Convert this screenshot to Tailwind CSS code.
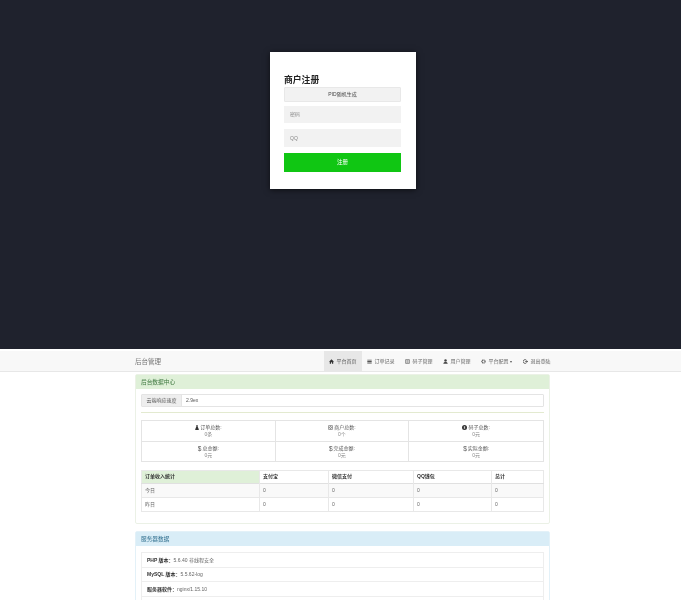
<!DOCTYPE html>
<html lang="zh-CN">
<head>
  <meta charset="UTF-8">
  <meta name="viewport" content="width=device-width, initial-scale=1.0">
  <title>商户注册</title>
  <script src="https://cdn.jsdelivr.net/npm/@tailwindcss/browser@4"></script>
</head>
<body class="bg-white h-[600px] overflow-hidden font-['Liberation_Sans','Noto_Sans_CJK_SC',sans-serif] text-[#555]">
<div class="blur-[0.35px]">
  <!-- register screen -->
  <section class="h-[349px] bg-[#1f222d] pt-[52px] pl-[270px]">
    <div class="w-[146px] h-[137px] bg-white shadow-[0_1px_6px_rgba(0,0,0,0.6)] pl-[14px] pr-[15px] pt-[22px]">
      <h1 class="text-[8.8px] leading-[13px] font-bold text-[#222]">商户注册</h1>
      <div class="h-[15px] bg-[#f2f2f2] border border-[#e8e8e8] rounded-[1px] text-[5px] leading-[13px] text-center text-[#444]">PID随机生成</div>
      <div class="h-[17px] mt-[4px] bg-[#f2f2f2] text-[5px] leading-[17px] pl-[6px] text-[#888]">密码</div>
      <div class="h-[18px] mt-[6px] bg-[#f2f2f2] text-[5px] leading-[18px] pl-[6px] text-[#888]">QQ</div>
      <button class="block w-full h-[19px] mt-[6px] bg-[#10c613] text-white text-[5.5px] leading-[19px]">注册</button>
    </div>
  </section>

  <!-- admin page -->
  <nav class="mt-[2px] h-[21px] bg-[#f8f8f8] border-b border-[#e7e7e7] flex items-center pl-[135px] pr-[125px]">
    <span class="pt-px text-[6.5px] text-[#777]">后台管理</span>
    <div class="ml-auto flex items-center h-full text-[5px] text-[#666]">
      <a class="h-full flex items-center gap-[2px] pt-px px-[5.5px] bg-[#e7e7e7] text-[#555]">
        <svg class="w-[5px] h-[5px]" viewBox="0 0 16 16" fill="#333"><path d="M8 1 0 8.500h2.500V15h4v-4.500h3V15h4V8.500H16z"/></svg>平台首页</a>
      <a class="h-full flex items-center gap-[2px] pt-px px-[5.5px]">
        <svg class="w-[5px] h-[5px]" viewBox="0 0 16 16" fill="#555"><path d="M1 2h14v3H1zM1 6.500h14v3H1zM1 11h14v3H1z"/></svg>订单记录</a>
      <a class="h-full flex items-center gap-[2px] pt-px px-[5.5px]">
        <svg class="w-[5px] h-[5px]" viewBox="0 0 16 16" fill="none" stroke="#555" stroke-width="2"><path d="M2 2h12v12H2zM5 6h6M5 10h6"/></svg>码子管理</a>
      <a class="h-full flex items-center gap-[2px] pt-px px-[5.5px]">
        <svg class="w-[5px] h-[5px]" viewBox="0 0 16 16" fill="#444"><circle cx="8" cy="5" r="4"/><path d="M1 15c0-4 3-5.500 7-5.500s7 1.500 7 5.500z"/></svg>用户管理</a>
      <a class="h-full flex items-center gap-[2px] pt-px px-[5.5px]">
        <svg class="w-[5px] h-[5px]" viewBox="0 0 16 16" fill="none" stroke="#444" stroke-width="3.500" stroke-dasharray="3 1.200"><circle cx="8" cy="8" r="5"/></svg>平台配置<span class="w-0 h-0 border-x-[1.500px] border-x-transparent border-t-[2px] border-t-[#555]"></span></a>
      <a class="h-full flex items-center gap-[2px] pt-px px-[5.5px]">
        <svg class="w-[5px] h-[5px]" viewBox="0 0 16 16" fill="none" stroke="#444" stroke-width="2.500"><path d="M11 4a6 6 0 1 0 0 8M7 8h8M12 5l3 3-3 3"/></svg>退出登陆</a>
    </div>
  </nav>

  <main class="w-[415px] ml-[135px] pt-[2px]">
    <!-- data center panel -->
    <section class="h-[150px] border border-[#ebf1e6] rounded-[2px]">
      <h2 class="h-[14px] bg-[#dff0d8] px-[5px] text-[5.7px] leading-[14px] text-[#3c763d]">后台数据中心</h2>
      <div class="px-[5px] pt-[5px]">
        <div class="flex h-[13px] border border-[#e4e4e4] rounded-[1px] text-[5px] leading-[11px]">
          <span class="w-[40px] bg-[#eee] text-center border-r border-[#e4e4e4]">云端响应速度</span>
          <span class="pl-[4px]">2.9ex</span>
        </div>
        <div class="mt-[5px] h-px bg-[#e3ead0]"></div>
        <div class="mt-[7px] grid grid-cols-3 h-[42px] border border-[#e4e4e4] text-center text-[5px] leading-[7px]">
          <div class="pt-[3px] border-r border-b border-[#e4e4e4]">
            <p class="flex justify-center items-center gap-px"><svg class="w-[4px] h-[5px]" viewBox="0 0 12 16" fill="#333"><path d="M4 0h4v5l4 9-1 2H1l-1-2 4-9z"/></svg>订单总数:</p>
            <p class="text-[#888]">0条</p>
          </div>
          <div class="pt-[3px] border-r border-b border-[#e4e4e4]">
            <p class="flex justify-center items-center gap-px"><svg class="w-[5px] h-[5px]" viewBox="0 0 16 16" fill="none" stroke="#444" stroke-width="2"><rect x="1" y="1" width="14" height="14" rx="4"/><circle cx="8" cy="8" r="3"/></svg>商户总数:</p>
            <p class="text-[#888]">0个</p>
          </div>
          <div class="pt-[3px] border-b border-[#e4e4e4]">
            <p class="flex justify-center items-center gap-px"><svg class="w-[5px] h-[5px]" viewBox="0 0 16 16" fill="#333"><circle cx="8" cy="8" r="8"/><path d="M6 4h4v8H6z" fill="#ccc"/></svg>码子总数:</p>
            <p class="text-[#888]">0元</p>
          </div>
          <div class="pt-[3px] border-r border-[#e4e4e4]">
            <p class="flex justify-center items-center gap-px"><span class="text-[6.5px]">$</span>总金额:</p>
            <p class="text-[#888]">0元</p>
          </div>
          <div class="pt-[3px] border-r border-[#e4e4e4]">
            <p class="flex justify-center items-center gap-px"><span class="text-[6.5px]">$</span>完成金额:</p>
            <p class="text-[#888]">0元</p>
          </div>
          <div class="pt-[3px]">
            <p class="flex justify-center items-center gap-px"><span class="text-[6.5px]">$</span>实际金额:</p>
            <p class="text-[#888]">0元</p>
          </div>
        </div>
        <table class="mt-[8px] w-full table-fixed border border-[#e8e8e8] text-[5px] text-[#666]">
          <colgroup><col class="w-[118px]"><col class="w-[69px]"><col class="w-[85px]"><col class="w-[78px]"><col></colgroup>
          <thead>
            <tr class="h-[13px] font-bold text-left text-[#333] border-b border-[#e0e0e0]">
              <th class="pl-[3px] bg-[#dff0d8]">订单收入统计</th>
              <th class="pl-[3px] border-l border-[#e8e8e8]">支付宝</th>
              <th class="pl-[3px] border-l border-[#e8e8e8]">微信支付</th>
              <th class="pl-[3px] border-l border-[#e8e8e8]">QQ钱包</th>
              <th class="pl-[3px] border-l border-[#e8e8e8]">总计</th>
            </tr>
          </thead>
          <tbody>
            <tr class="h-[14px] bg-[#f9f9f9] border-b border-[#e8e8e8]">
              <td class="pl-[3px]">今日</td><td class="pl-[3px] border-l border-[#e8e8e8]">0</td><td class="pl-[3px] border-l border-[#e8e8e8]">0</td><td class="pl-[3px] border-l border-[#e8e8e8]">0</td><td class="pl-[3px] border-l border-[#e8e8e8]">0</td>
            </tr>
            <tr class="h-[14px]">
              <td class="pl-[3px]">昨日</td><td class="pl-[3px] border-l border-[#e8e8e8]">0</td><td class="pl-[3px] border-l border-[#e8e8e8]">0</td><td class="pl-[3px] border-l border-[#e8e8e8]">0</td><td class="pl-[3px] border-l border-[#e8e8e8]">0</td>
            </tr>
          </tbody>
        </table>
      </div>
    </section>

    <!-- server panel -->
    <section class="mt-[7px] h-[80px] border border-[#e3f1f8] rounded-[2px]">
      <h2 class="h-[14px] bg-[#d9edf7] px-[5px] text-[5.7px] leading-[14px] text-[#31708f]">服务器数据</h2>
      <ul class="mx-[5px] mt-[6px] border border-[#eee] text-[5px] text-[#666]">
        <li class="h-[15px] leading-[14px] pl-[5px] border-b border-[#eee]"><b class="text-[#333]">PHP 版本：</b>5.6.40 非线程安全</li>
        <li class="h-[14px] leading-[13px] pl-[5px] border-b border-[#eee]"><b class="text-[#333]">MySQL 版本：</b>5.5.62-log</li>
        <li class="h-[15px] leading-[14px] pl-[5px] border-b border-[#eee]"><b class="text-[#333]">服务器软件：</b>nginx/1.15.10</li>
        <li class="h-[15px]"></li>
      </ul>
    </section>
  </main>
</div>
</body>
</html>
